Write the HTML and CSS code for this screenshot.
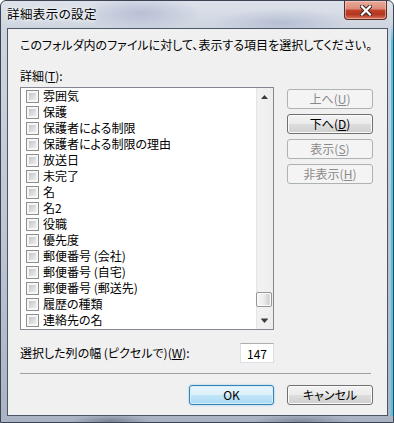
FILE: index.html
```html
<!DOCTYPE html>
<html lang="ja">
<head>
<meta charset="utf-8">
<title>詳細表示の設定</title>
<link rel="stylesheet" href="styles.css">
</head>
<body>
<div class="window">
  <div class="titlebar">
    <span class="title">詳細表示の設定</span>
    <div class="close">
      <svg width="12" height="11" viewBox="0 0 12 11">
        <path d="M2 1.5 L10 9.5 M10 1.5 L2 9.5" stroke="#3b2622" stroke-width="4.2" stroke-linecap="square" fill="none"/>
        <path d="M2 1.5 L10 9.5 M10 1.5 L2 9.5" stroke="#ffffff" stroke-width="2.2" stroke-linecap="square" fill="none"/>
      </svg>
    </div>
  </div>
  <div class="client">
    <p class="intro">このフォルダ内のファイルに対して、表示する項目を選択してください。</p>
    <div class="label">詳細(<u>T</u>):</div>
    <div class="main">
      <div class="listbox">
        <ul class="items">
          <li><span class="cb"></span>雰囲気</li>
          <li><span class="cb"></span>保護</li>
          <li><span class="cb"></span>保護者による制限</li>
          <li><span class="cb"></span>保護者による制限の理由</li>
          <li><span class="cb"></span>放送日</li>
          <li><span class="cb"></span>未完了</li>
          <li><span class="cb"></span>名</li>
          <li><span class="cb"></span>名2</li>
          <li><span class="cb"></span>役職</li>
          <li><span class="cb"></span>優先度</li>
          <li><span class="cb"></span>郵便番号 (会社)</li>
          <li><span class="cb"></span>郵便番号 (自宅)</li>
          <li><span class="cb"></span>郵便番号 (郵送先)</li>
          <li><span class="cb"></span>履歴の種類</li>
          <li><span class="cb"></span>連絡先の名</li>
        </ul>
        <div class="scrollbar">
          <div class="sb-btn">
            <svg width="7" height="4" viewBox="0 0 7 4"><polygon points="0,4 3.5,0 7,4" fill="#3c3c3c"/></svg>
          </div>
          <div class="sb-track"><div class="thumb"></div></div>
          <div class="sb-btn">
            <svg width="7" height="5" viewBox="0 0 7 5"><rect x="0" y="0" width="7" height="1" fill="#9a9a9a"/><polygon points="0,1 7,1 3.5,5" fill="#3c3c3c"/></svg>
          </div>
        </div>
      </div>
      <div class="side">
        <div class="btn disabled">上へ(<u>U</u>)</div>
        <div class="btn">下へ(<u>D</u>)</div>
        <div class="btn disabled">表示(<u>S</u>)</div>
        <div class="btn disabled">非表示(<u>H</u>)</div>
      </div>
    </div>
    <div class="width-row">
      <span>選択した列の幅 (ピクセルで)(<u>W</u>):</span>
      <input class="num" type="text" value="147">
    </div>
    <div class="sep"></div>
    <div class="footer">
      <div class="btn default">OK</div>
      <div class="btn">キャンセル</div>
    </div>
  </div>
</div>
</body>
</html>
```

FILE: styles.css
```css
* { box-sizing: border-box; }
html, body { margin: 0; padding: 0; background: #ffffff; }
body {
  font-family: "Noto Sans CJK JP", "Noto Sans CJK SC", sans-serif;
  font-size: 12px;
  color: #000;
  font-feature-settings: "palt";
}
.window {
  position: relative;
  width: 394px;
  height: 423px;
  border: 1px solid #3a4452;
  border-radius: 6px 6px 0 0;
  background:
    radial-gradient(ellipse 60px 18px at 140px 12px, rgba(160,168,200,0.55), transparent),
    radial-gradient(ellipse 70px 14px at 280px 22px, rgba(150,160,195,0.45), transparent),
    radial-gradient(ellipse 40px 6px at 110px 420px, rgba(90,100,120,0.6), transparent),
    radial-gradient(ellipse 50px 6px at 300px 420px, rgba(90,100,120,0.5), transparent),
    linear-gradient(180deg, #dde2ea 0, #cfd5e0 26px, #bcc4d2 60%, #a9b3c3 100%);
  display: flex;
  flex-direction: column;
  overflow: hidden;
}
.window::after {
  content: "";
  position: absolute;
  right: 0;
  top: 22px;
  bottom: 6px;
  width: 2px;
  background: linear-gradient(180deg, rgba(70,196,238,0), #46c4ee 20px, #46c4ee);
}
.titlebar {
  height: 27px;
  flex: none;
  display: flex;
  justify-content: space-between;
  align-items: flex-start;
}
.title {
  margin: 5px 0 0 6px;
  line-height: 16px;
  font-size: 12.5px;
  letter-spacing: 0.4px;
  color: #000;
  text-shadow: 0 0 6px #fff, 0 0 3px #fff;
}
.close {
  width: 43px;
  height: 19px;
  margin-right: 6px;
  border: 1px solid #5b2a22;
  border-top: none;
  border-radius: 0 0 4px 4px;
  background: linear-gradient(180deg, #e9ab9c 0, #dd8a76 45%, #c1432c 50%, #b53621 75%, #d8765f 100%);
  box-shadow: inset 0 0 0 1px rgba(255,220,210,0.5);
  display: flex;
  align-items: center;
  justify-content: center;
}
.close svg { display: block; }
.client {
  flex: none;
  height: 388px;
  margin: 0 5px 0 6px;
  border: 1px solid #4a5666;
  background: #f0f0f0;
  padding: 8px 14px 0 12px;
  display: flex;
  flex-direction: column;
}
.intro { margin: 0; line-height: 16px; white-space: nowrap; }
.label { margin-top: 15px; line-height: 16px; }
.main { margin-top: 3px; display: flex; align-items: flex-start; }
.listbox {
  width: 254px;
  height: 243px;
  border: 1px solid #828790;
  background: #fff;
  display: flex;
}
.items {
  list-style: none;
  margin: 0;
  padding: 0;
  flex: 1;
  overflow: hidden;
}
.items li {
  height: 16px;
  display: flex;
  align-items: center;
  padding-left: 5px;
  white-space: nowrap;
  line-height: 16px;
}
.cb {
  width: 13px;
  height: 13px;
  flex: none;
  margin-right: 4px;
  border: 1px solid #8e8f8f;
  padding: 2px;
  background: linear-gradient(135deg, #c2c4c6, #eeeeee) content-box, #f6f6f6;
}
.scrollbar {
  width: 17px;
  flex: none;
  display: flex;
  flex-direction: column;
  background: linear-gradient(90deg, #e3e3e3 0, #f2f2f2 2px, #ededed 100%);
}
.sb-btn {
  height: 17px;
  flex: none;
  display: flex;
  align-items: center;
  justify-content: center;
}
.sb-btn svg { display: block; }
.sb-track {
  flex: 1;
  display: flex;
  flex-direction: column;
}
.thumb {
  margin: auto 1px 5px 0;
  height: 15px;
  border: 1px solid #959595;
  border-radius: 2px;
  background: linear-gradient(90deg, #f6f6f6 0, #ececec 50%, #d4d4d4 80%, #e2e2e2 100%);
  box-shadow: inset 0 0 0 1px #fbfbfb;
}
.side {
  margin-left: 13px;
  padding-top: 2px;
  width: 86px;
  display: flex;
  flex-direction: column;
  gap: 5px;
}
.btn {
  height: 20px;
  border: 1px solid #707070;
  border-radius: 3px;
  background: linear-gradient(180deg, #f3f3f3 0, #ebebeb 48%, #dddddd 52%, #cfcfcf 100%);
  box-shadow: inset 0 0 0 1px #fbfbfb;
  display: flex;
  align-items: center;
  justify-content: center;
  line-height: 16px;
  white-space: nowrap;
}
.btn.disabled {
  border-color: #adb2b5;
  background: #f4f4f4;
  box-shadow: none;
  color: #8a8a8a;
}
.btn.default {
  border-color: #3c7fb1;
  background: linear-gradient(180deg, #e8f5fc 0, #dcf1fb 48%, #c1e5f8 52%, #a9daf4 100%);
  box-shadow: inset 0 0 0 1px #d4eefc, 0 0 2px #6cc6ef;
}
.width-row {
  margin-top: 13px;
  width: 254px;
  height: 20px;
  display: flex;
  align-items: center;
  justify-content: space-between;
  line-height: 16px;
}
.num {
  width: 34px;
  height: 20px;
  margin: 0;
  padding: 0 6px 0 0;
  border: 1px solid #dbdfe6;
  border-top-color: #abadb3;
  background: #fff;
  text-align: right;
  font: inherit;
  font-size: 12px;
  color: #000;
  outline: none;
}
.sep {
  margin-top: 10px;
  width: 351px;
  height: 1px;
  background: #a0a0a0;
  border-bottom: 0;
}
.footer {
  margin-top: 11px;
  display: flex;
  justify-content: flex-end;
  gap: 13px;
}
.footer .btn.default { width: 85px; }
.footer .btn { width: 86px; }
```
